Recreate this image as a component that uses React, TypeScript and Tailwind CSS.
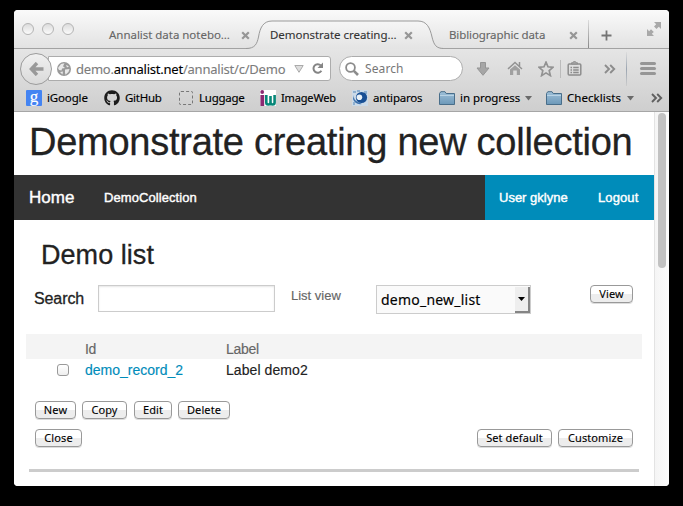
import React from "react";
import { FaGithub } from "react-icons/fa";

function CloseMark() {
  return (
    <svg className="h-[9px] w-[9px] shrink-0" viewBox="0 0 9 9">
      <path d="M1.2 1.2 L7.8 7.8 M7.8 1.2 L1.2 7.8" stroke="#969696" strokeWidth="2.2" />
    </svg>
  );
}

function TrafficLight() {
  return <span className="h-3 w-3 rounded-full border-[1.5px] border-[#b4b4b4] bg-linear-to-b from-[#dcdcdc] to-[#fbfbfb]" />;
}

function TabBar() {
  return (
    <div className="flex h-[39px] shrink-0 border-b border-[#a2a2a2] bg-linear-to-b from-[#fafafa] to-[#e2e2e2] text-[11.5px] leading-[16px] text-[#666] [-webkit-text-stroke:0.1px]">
      <div className="flex w-[95px] gap-2 pl-2 pt-[13px]">
        <TrafficLight />
        <TrafficLight />
        <TrafficLight />
      </div>
      <div className="flex w-[145px] items-center pt-3">
        <span className="w-[132px] whitespace-nowrap tracking-[-0.03px]">Annalist data notebo…</span>
        <CloseMark />
      </div>
      <div className="relative -mb-px flex w-[181px] items-center pl-4 pt-[11px] text-[#333]">
        <svg className="absolute -left-[8px] top-0 h-[39px] w-[197px]" viewBox="0 0 197 39">
          <defs>
            <linearGradient id="tab" x1="0" y1="0" x2="0" y2="1">
              <stop offset="0" stopColor="#f6f6f6" />
              <stop offset="1" stopColor="#e4e4e4" />
            </linearGradient>
          </defs>
          <path d="M0 39V38.5C9 38.5 11 34 12.5 27C14 18 17 11 26 11H172C181 11 184 18 186 27C188 35 190 38.5 198 38.5V39Z" fill="url(#tab)" />
          <path d="M0 38.5C9 38.5 11 34 12.5 27C14 18 17 11 26 11H172C181 11 184 18 186 27C188 35 190 38.5 198 38.5" fill="none" stroke="#999" />
        </svg>
        <span className="relative w-[134px] whitespace-nowrap tracking-[-0.04px]">Demonstrate creating…</span>
        <span className="relative flex"><CloseMark /></span>
      </div>
      <div className="flex w-[153px] items-center pl-[14px] pt-3">
        <span className="w-[120px] whitespace-nowrap tracking-[-0.11px]">Bibliographic data</span>
        <CloseMark />
      </div>
      <div className="mt-[10px] w-px bg-linear-to-b from-[#ddd] to-[#888]" />
      <svg className="ml-[12px] mt-[20px] h-[11px] w-[11px]" viewBox="0 0 11 11">
        <path d="M5.5 0.5v10M0.5 5.5h10" stroke="#747474" strokeWidth="1.8" />
      </svg>
      <svg className="ml-[34px] mt-[11px] h-4 w-4" viewBox="0 0 16 16" fill="#a9a9a9">
        <path d="M8 1H15V8L12.8 5.8L10.5 8L8 5.5L10.2 3.2Z" />
        <path d="M1 8L3.2 10.2L5 8.2L7.8 11L5.8 12.8L8 15H1Z" />
      </svg>
    </div>
  );
}

function Chevrons({ dark }: { dark?: boolean }) {
  return (
    <svg className="h-[10px] w-[12px] shrink-0" viewBox="0 0 12 10" fill="none" stroke={dark ? "#606060" : "#8c8c8c"} strokeWidth="1.9">
      <path d="M1 1L5 5L1 9M6.2 1L10.2 5L6.2 9" />
    </svg>
  );
}

function NavBar() {
  return (
    <div className="flex h-[37px] shrink-0 items-center pl-[6px] pt-[2px]">
      <div className="relative z-10 flex h-8 w-8 shrink-0 items-center justify-center rounded-full border border-[#9c9c9c] bg-linear-to-b from-[#f0f0f0] to-[#dadada]">
        <svg className="h-[14px] w-[15px]" viewBox="0 0 15 14" fill="none" stroke="#999" strokeWidth="3.4">
          <path d="M8 1L2.4 7L8 13M3 7H14.5" />
        </svg>
      </div>
      <div className="-ml-1 flex h-[25px] w-[283px] shrink-0 items-center rounded-r-[3px] border border-[#acacac] bg-white pl-2 text-[13px] leading-4 text-[#7c7c7c]">
        <svg className="h-[14px] w-[14px] shrink-0" viewBox="0 0 14 14">
          <circle cx="7" cy="7" r="7" fill="#999" />
          <path d="M1 6L4 2L7.5 1.2L6 4.2L8 6L5 6.5L4.5 8.5L2 8ZM9 3L12 4.2L10 5.5ZM8 7.5L12.5 7L11.5 10L8.5 12.8L8 10.5ZM3 10L6 9.5L5.5 12.5Z" fill="#e9e9e9" />
        </svg>
        <span className="ml-[5px] w-[218px] whitespace-nowrap tracking-[-0.22px] [-webkit-text-stroke:0.1px]">
          demo.<span className="text-black">annalist.net</span>/annalist/c/Demo
        </span>
        <svg className="h-[8px] w-[10px] shrink-0" viewBox="0 0 10 8">
          <path d="M0.8 0.5H9.2L5 7.3Z" fill="#ddd" stroke="#aaa" />
        </svg>
        <svg className="ml-[7px] h-[13px] w-[13px] shrink-0" viewBox="0 0 13 13">
          <path d="M9.8 3.4A4.3 4.3 0 1 0 10.4 8.8" fill="none" stroke="#858585" strokeWidth="2" />
          <path d="M12 0.5V6H6.5Z" fill="#858585" />
        </svg>
      </div>
      <div className="ml-[8px] flex h-[25px] w-[124px] shrink-0 items-center rounded-full border border-[#acacac] bg-white pl-[5px] text-[12px] text-[#777]">
        <svg className="h-[14px] w-[14px]" viewBox="0 0 14 14" fill="none" stroke="#8c8c8c">
          <circle cx="5.5" cy="5.5" r="4.4" strokeWidth="1.8" />
          <path d="M8.8 8.8L13 13" strokeWidth="2.6" />
        </svg>
        <span className="ml-[6px] tracking-[0.1px]">Search</span>
      </div>
      <svg className="ml-[13px] h-[14px] w-[14px] shrink-0" viewBox="0 0 14 14">
        <path d="M4.5 0.5H9.5V6H13L7 13.3L1 6H4.5Z" fill="#a6a6a6" stroke="#959595" />
      </svg>
      <svg className="ml-[17px] h-[15px] w-[16px] shrink-0" viewBox="0 0 16 15">
        <path d="M3 8.5L8 4.2L13 8.5V14H9.8V9.5H6.2V14H3Z" fill="#a0a0a0" />
        <path d="M1 8L8 1.5L15 8M12.5 1V5" fill="none" stroke="#929292" strokeWidth="1.5" />
      </svg>
      <svg className="ml-[15px] h-4 w-4 shrink-0" viewBox="0 0 16 16">
        <path d="M8 1.2L10 5.8L15 6.3L11.2 9.6L12.4 14.6L8 11.9L3.6 14.6L4.8 9.6L1 6.3L6 5.8Z" fill="none" stroke="#929292" strokeWidth="1.7" />
      </svg>
      <div className="ml-[6px] h-[18px] w-px shrink-0 bg-[#bbb]" />
      <svg className="ml-[6px] h-[15px] w-[15px] shrink-0" viewBox="0 0 15 15" fill="none" stroke="#8d8d8d">
        <rect x="1.2" y="3" width="12.6" height="11" rx="1" strokeWidth="1.5" />
        <path d="M4.5 3V1.8H6L6.5 0.7H8.5L9 1.8H10.5V3Z" fill="#aaa" />
        <path d="M3.5 6.5H5M6.2 6.5H11.7M3.5 9H5M6.2 9H11.7M3.5 11.5H5M6.2 11.5H11.7" strokeWidth="1.3" />
      </svg>
      <span className="ml-[22px] flex"><Chevrons /></span>
      <div className="ml-[10px] h-[34px] w-px shrink-0 bg-linear-to-b from-[#ddd] via-[#9ba5b1] to-[#ccc]" />
      <div className="ml-[13px] flex w-4 shrink-0 flex-col gap-[2px]">
        <span className="h-[3px] rounded-sm bg-[#969696]" />
        <span className="h-[3px] rounded-sm bg-[#969696]" />
        <span className="h-[3px] rounded-sm bg-[#969696]" />
      </div>
    </div>
  );
}

function Folder() {
  return (
    <svg className="h-[14px] w-4 shrink-0" viewBox="0 0 16 14">
      <defs>
        <linearGradient id="fold" x1="0" y1="0" x2="0" y2="1">
          <stop offset="0" stopColor="#9fc0d9" />
          <stop offset="1" stopColor="#6c98b8" />
        </linearGradient>
      </defs>
      <path d="M0.5 13.5V2.5L1.8 0.7H6L7.2 2.5H15.5V13.5Z" fill="url(#fold)" stroke="#496e8a" />
      <path d="M1 4.5H15" stroke="#b9d3e5" />
    </svg>
  );
}

function Caret() {
  return (
    <svg className="h-[5px] w-[7px] shrink-0" viewBox="0 0 7 5">
      <path d="M0 0H7L3.5 4.5Z" fill="#6a6a6a" />
    </svg>
  );
}

function BookmarksBar() {
  return (
    <div className="flex h-[26px] shrink-0 items-center whitespace-nowrap border-b border-[#a6a6a6] pb-px pl-3 text-[11.5px] leading-4 text-black [-webkit-text-stroke:0.15px]">
      <span className="flex h-4 w-4 shrink-0 items-center justify-center rounded-[1px] bg-[#4484f2] pb-[3px] font-['Liberation_Serif',serif] text-[17px] text-white">g</span>
      <span className="ml-[5px] w-[57px] tracking-[-0.15px]">iGoogle</span>
      <FaGithub className="h-4 w-4 shrink-0 text-[#1c1c1c]" />
      <span className="ml-[5px] w-[54px] tracking-[-0.25px]">GitHub</span>
      <span className="h-[14px] w-[14px] shrink-0 rounded-[2px] border border-dashed border-[#777]" />
      <span className="ml-[6px] w-[61px] tracking-[-0.25px]">Luggage</span>
      <svg className="h-4 w-4 shrink-0" viewBox="0 0 16 16">
        <rect width="16" height="16" fill="#fff" />
        <circle cx="2.2" cy="2" r="1.9" fill="#8b2a72" />
        <path d="M0.4 5H4.2V16H0.4Z" fill="#8b2a72" />
        <path d="M6.3 5V12.5Q6.3 14.5 8.3 14.5Q10.5 14.5 10.5 12.5V6V12.5Q10.5 14.5 12.6 14.5Q14.6 14.5 14.6 12.5V5" fill="none" stroke="#078778" strokeWidth="2.6" />
      </svg>
      <span className="ml-[5px] w-[71px] text-[11px] tracking-[-0.15px]">ImageWeb</span>
      <svg className="h-4 w-4 shrink-0" viewBox="0 0 16 16">
        <rect width="16" height="16" fill="#cbdae8" />
        <path d="M1 1H4V3H1ZM12 1H15V4H12ZM1 12H3V15H1ZM5 0H8V2H5Z" fill="#8eafcf" />
        <circle cx="9.5" cy="7.5" r="5.6" fill="#174f95" />
        <circle cx="7.4" cy="7.2" r="2.8" fill="#e8f1f8" />
        <path d="M2 5Q1 10 6 12L10 14Q3 15 1 9Z" fill="#3d72ae" />
      </svg>
      <span className="ml-[5px] w-[66px] tracking-[-0.2px]">antiparos</span>
      <Folder />
      <span className="ml-[5px] w-[65px] tracking-[-0.05px]">in progress</span>
      <Caret />
      <span className="ml-[14px] flex"><Folder /></span>
      <span className="ml-[5px] w-[60px] tracking-[0.05px]">Checklists</span>
      <Caret />
      <span className="ml-[17px] flex"><Chevrons dark /></span>
    </div>
  );
}

function PushButton({ className, children }: { className: string; children: React.ReactNode }) {
  return (
    <button className={"h-[18px] shrink-0 whitespace-nowrap rounded-[4px] border border-[#999] bg-linear-to-b from-white from-50% to-[#ededed] to-50% text-center font-['Noto_Sans',sans-serif] text-[11px] leading-[16px] tracking-[0.1px] text-black shadow-[0_1px_0_#ddd] [-webkit-text-stroke:0.1px] " + className}>
      {children}
    </button>
  );
}

function Page() {
  return (
    <main className="h-full w-[640px] shrink-0 bg-white font-['Liberation_Sans',Arial,sans-serif] text-[#222] [-webkit-text-stroke:0.15px]">
      <h1 className="h-[63px] whitespace-nowrap pl-[15px] pt-[8px] text-[38px] leading-[45px] tracking-[-0.26px] [-webkit-text-stroke:0.3px]">Demonstrate creating new collection</h1>
      <nav className="flex h-[45px] items-center bg-[#333] text-[13px] text-white [-webkit-text-stroke:0.4px]">
        <span className="w-[90px] pl-[15px] text-[17px]">Home</span>
        <span className="flex-1 tracking-[0.08px]">DemoCollection</span>
        <div className="flex h-full w-[169px] items-center bg-[#008cba] pl-[14px]">
          <span className="w-[99px]">User gklyne</span>
          <span className="tracking-[0.1px]">Logout</span>
        </div>
      </nav>
      <h2 className="h-[65px] pl-[27px] pt-[19px] text-[27px] leading-[32px] tracking-[0.05px] [-webkit-text-stroke:0.3px]">Demo list</h2>
      <div className="flex h-[49px] items-start">
        <label className="w-[84px] pl-[20px] pt-[4px] text-[16px] leading-5 tracking-[-0.1px] [-webkit-text-stroke:0.3px]">Search</label>
        <input className="h-[27px] w-[177px] border border-[#ccc] bg-white shadow-[inset_0_1px_2px_rgba(0,0,0,0.1)]" />
        <span className="w-[101px] pl-[16px] pt-[2px] text-[13px] leading-[18px] text-[#666]">List view</span>
        <div className="flex h-[29px] w-[155px] border border-[#ccc] bg-[#fafafa] font-['Noto_Sans',sans-serif] text-[14px] leading-[28px] text-black">
          <span className="flex-1 pl-[4px] tracking-[0.22px]">demo_new_list</span>
          <span className="mt-px flex w-[15px] items-center justify-center border-b-2 border-r-2 border-[#858585] bg-[#eee]">
            <svg className="h-[4px] w-[7px]" viewBox="0 0 7 4"><path d="M0 0H7L3.5 4Z" /></svg>
          </span>
        </div>
        <PushButton className="ml-[59px] w-[43px]">View</PushButton>
      </div>
      <div className="ml-3 flex h-[25px] w-[616px] bg-[#f4f4f4] pl-[59px] pt-[6px] text-[14px] leading-[18px] tracking-[-0.3px] text-[#666]">
        <span className="w-[141px]">Id</span>
        <span>Label</span>
      </div>
      <div className="ml-3 flex h-[42px] pl-[31px] pt-[2px] text-[14px] leading-[18px]">
        <span className="mt-[3px] h-3 w-3 rounded-[3px] border border-[#999] bg-linear-to-b from-white to-[#eee]" />
        <span className="ml-[16px] w-[141px] text-[#008cba]">demo_record_2</span>
        <span className="tracking-[0.08px]">Label demo2</span>
      </div>
      <div className="flex h-[28px] pl-[21px]">
        <PushButton className="w-[41px]">New</PushButton>
        <PushButton className="ml-[6px] w-[45px]">Copy</PushButton>
        <PushButton className="ml-[7px] w-[38px]">Edit</PushButton>
        <PushButton className="ml-[6px] w-[52px]">Delete</PushButton>
      </div>
      <div className="flex h-[40px] pl-[21px] pr-[21px]">
        <PushButton className="w-[47px]">Close</PushButton>
        <PushButton className="ml-auto w-[75px]">Set default</PushButton>
        <PushButton className="ml-[6px] w-[75px]">Customize</PushButton>
      </div>
      <div className="ml-[15px] h-[3px] w-[610px] bg-[#ccc]" />
    </main>
  );
}

export default function App() {
  return (
    <div className="h-[506px] w-[683px] bg-black pl-[14px] pt-[10px] font-['Noto_Sans',sans-serif]">
      <div className="flex h-[476px] w-[655px] flex-col overflow-hidden rounded-[4px] bg-white">
        <TabBar />
        <div className="flex shrink-0 flex-col bg-linear-to-b from-[#e5e5e5] to-[#cecece]">
          <NavBar />
          <BookmarksBar />
        </div>
        <div className="flex h-[374px]">
          <Page />
          <div className="flex flex-1 justify-center border-l border-[#e3e3e3] bg-linear-to-r from-[#f5f5f5] to-[#fcfcfc] pt-px">
            <div className="h-[155px] w-2 rounded-full bg-[#c2c2c2]" />
          </div>
        </div>
      </div>
    </div>
  );
}
